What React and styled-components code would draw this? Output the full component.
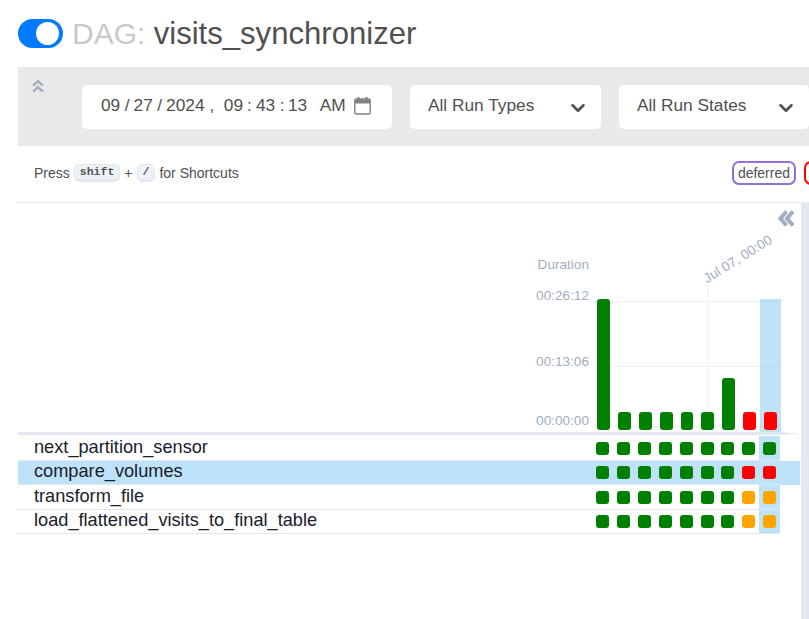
import React from "react";
import styled, { createGlobalStyle } from "styled-components";
import { ChevronDown } from "lucide-react";

const GlobalStyle = createGlobalStyle`
  html, body {
    margin: 0;
    padding: 0;
    background: #fff;
    overflow: hidden;
  }
  body {
    font-family: "Liberation Sans", Arial, sans-serif;
    color: #51504f;
  }
`;

const Page = styled.div`
  width: 809px;
  height: 619px;
  padding-left: 18px;
  box-sizing: border-box;
  display: flex;
  flex-direction: column;
  overflow: hidden;
`;

const TitleRow = styled.div`
  height: 67px;
  flex: none;
  display: flex;
  align-items: center;
  gap: 9px;
  padding-bottom: 1px;
  box-sizing: border-box;
`;

const Toggle = styled.div`
  width: 45px;
  height: 29px;
  border-radius: 15px;
  background: #007bff;
  position: relative;
  flex: none;
  &::after {
    content: "";
    position: absolute;
    width: 23px;
    height: 23px;
    border-radius: 50%;
    background: #fff;
    top: 3px;
    right: 4px;
  }
`;

const Title = styled.h1`
  margin: 0;
  font-size: 31.1px;
  font-weight: 400;
  line-height: 33px;
  white-space: nowrap;
  span {
    color: #c9c9c9;
    font-size: 30px;
  }
`;

const FilterPanel = styled.div`
  height: 79px;
  flex: none;
  background: #e9e9ea;
  display: flex;
  gap: 18px;
  padding-top: 18px;
  box-sizing: border-box;
  position: relative;
`;

const CollapseUp = styled.svg`
  position: absolute;
  left: 14px;
  top: 12px;
  width: 12px;
  height: 15px;
  color: #a0aec0;
`;

const Field = styled.div`
  width: ${(p) => p.$width}px;
  margin-left: ${(p) => p.$offset || 0}px;
  height: 44px;
  flex: none;
  background: #fff;
  border-radius: 5px;
  display: flex;
  align-items: center;
  box-sizing: border-box;
  font-size: 17.3px;
  white-space: nowrap;
`;

const DateField = styled(Field)`
  padding: 0 0 3px 19px;
`;

const Seg = styled.span`
  margin-left: ${(p) => p.$gap || 0}px;
`;

const CalendarIcon = styled.svg`
  width: 17px;
  height: 19px;
  margin-left: 8px;
  color: #808080;
`;

const SelectField = styled(Field)`
  padding: 0 12px 3px 18px;
  justify-content: space-between;
  svg {
    margin-top: 4px;
  }
`;

const ShortcutRow = styled.div`
  height: 57px;
  flex: none;
  border-bottom: 1px solid #e2e8f0;
  box-sizing: border-box;
  display: flex;
  align-items: center;
  padding-left: 16px;
  padding-bottom: 3px;
  font-size: 14px;
  overflow: hidden;
`;

const Kbd = styled.kbd`
  font-family: "Liberation Mono", monospace;
  font-size: 11.5px;
  font-weight: 700;
  line-height: 14px;
  background: #edf2f7;
  border: 1px solid #e2e8f0;
  border-bottom-width: 3px;
  border-radius: 5px;
  padding: 0 5px;
  margin: 0 4px;
  color: #51504f;
`;

const Legend = styled.div`
  margin-left: auto;
  display: flex;
  gap: 8px;
  flex: none;
  margin-right: -39px;
`;

const Badge = styled.div`
  height: 24px;
  box-sizing: border-box;
  border: 2px solid ${(p) => p.$color};
  border-radius: 7px;
  padding: 0 3.5px;
  display: flex;
  align-items: center;
  font-size: 14px;
`;

const GridPanel = styled.div`
  flex: 1;
  display: flex;
  min-height: 0;
`;

const Main = styled.div`
  flex: 1;
  min-width: 0;
  margin-right: 1px;
`;

const Stripe = styled.div`
  width: 8px;
  flex: none;
  background: #e2e8f0;
`;

const CollapseBar = styled.div`
  height: 96px;
  display: flex;
  justify-content: flex-end;
  padding: 6px 5px 0 0;
  box-sizing: border-box;
  color: #a0aec0;
`;

const ChartArea = styled.div`
  display: flex;
  height: 133px;
  justify-content: flex-end;
  padding-right: 19px;
`;

const YAxis = styled.div`
  width: 70px;
  flex: none;
  margin-right: 4px;
  text-align: right;
  font-size: 13.6px;
  line-height: 14px;
  color: #a0aec0;
  position: relative;
`;

const AxisLabel = styled.div`
  margin-top: ${(p) => p.$top}px;
  white-space: nowrap;
`;

const AxisTitle = styled.div`
  position: absolute;
  right: 0;
  top: -41px;
`;

const Plot = styled.div`
  width: 188px;
  flex: none;
  display: flex;
  position: relative;
`;

const HLine = styled.div`
  position: absolute;
  left: 0;
  right: 0;
  top: ${(p) => p.$top}px;
  height: 1px;
  background: rgba(160, 174, 192, 0.18);
`;

const VLine = styled.div`
  position: absolute;
  left: 115px;
  top: -10px;
  bottom: 2px;
  width: 1px;
  background: #edf2f7;
`;

const DateTick = styled.div`
  position: absolute;
  left: 112px;
  top: -26px;
  font-size: 13.6px;
  line-height: 14px;
  color: #a0aec0;
  white-space: nowrap;
  transform: rotate(-32deg);
  transform-origin: left center;
`;

const BarCol = styled.div`
  width: 20.875px;
  flex: none;
  padding: 0 4px 2px;
  box-sizing: border-box;
  display: flex;
  align-items: flex-end;
  background: ${(p) => (p.$active ? "#bee3f8" : "transparent")};
`;

const Bar = styled.div`
  width: 13px;
  height: ${(p) => p.$height}px;
  border-radius: 3px;
  background: ${(p) => p.$color};
  position: relative;
  z-index: 1;
`;

const Separator = styled.div`
  height: 3px;
  background: #e2e8f0;
  margin-bottom: 1px;
  clip-path: polygon(0 0, 762px 0, 100% 60%, 762px 100%, 0 100%);
`;

const Row = styled.div`
  background: ${(p) => (p.$selected ? "#bee3f8" : "transparent")};
`;

const RowBody = styled.div`
  height: ${(p) => p.$height}px;
  box-sizing: border-box;
  display: flex;
  align-items: stretch;
  margin-right: 20px;
  border-bottom: 1px solid #e2e8f0;
`;

const TaskName = styled.div`
  flex: 1;
  padding-left: 16px;
  font-size: 18.2px;
  line-height: ${(p) => p.$lineHeight}px;
  color: #1a202c;
  white-space: nowrap;
`;

const Cell = styled.div`
  width: 20.875px;
  flex: none;
  display: flex;
  align-items: center;
  padding-left: 4px;
  box-sizing: border-box;
  background: ${(p) => (p.$active ? "#bee3f8" : "transparent")};
`;

const Square = styled.div`
  width: 13px;
  height: 13px;
  border-radius: 3px;
  background: ${(p) => p.$color};
`;

const G = "#008000";
const R = "#ff0000";
const O = "#ffa500";

const bars = [
  [131, G], [18, G], [18, G], [18, G], [18, G], [18, G], [52, G], [18, R], [18, R],
];

const tasks = [
  { name: "next_partition_sensor", height: 25, states: [G, G, G, G, G, G, G, G, G] },
  { name: "compare_volumes", height: 24, selected: true, states: [G, G, G, G, G, G, G, R, R] },
  { name: "transform_file", height: 25, states: [G, G, G, G, G, G, G, O, O] },
  { name: "load_flattened_visits_to_final_table", height: 24, states: [G, G, G, G, G, G, G, O, O] },
];

const App = () => {
  return (
    <>
      <GlobalStyle />
      <Page>
        <TitleRow>
          <Toggle />
          <Title>
            <span>DAG: </span>visits_synchronizer
          </Title>
        </TitleRow>

        <FilterPanel>
          <CollapseUp viewBox="0 0 12 15" fill="none" stroke="currentColor" strokeWidth="2.4">
            <path d="M1.2 6.6 6 2.2l4.8 4.4M1.2 12.6 6 8.2l4.8 4.4" />
          </CollapseUp>
          <DateField $width={310} $offset={64}>
            <Seg>09</Seg>
            <Seg $gap={4.5}>/</Seg>
            <Seg $gap={4}>27</Seg>
            <Seg $gap={4.5}>/</Seg>
            <Seg $gap={4}>2024</Seg>
            <Seg $gap={5}>,</Seg>
            <Seg $gap={9.5}>09</Seg>
            <Seg $gap={4}>:</Seg>
            <Seg $gap={4}>43</Seg>
            <Seg $gap={4.5}>:</Seg>
            <Seg $gap={3.5}>13</Seg>
            <Seg $gap={12.5}>AM</Seg>
            <CalendarIcon viewBox="0 0 17 19" fill="none">
              <path d="M1 7.5h15V3.5H1z" fill="currentColor" />
              <rect x="0.8" y="3" width="15.4" height="15" rx="1.5" stroke="currentColor" strokeWidth="1.4" />
              <path d="M4.5 1v3M12.5 1v3" stroke="currentColor" strokeWidth="2" />
            </CalendarIcon>
          </DateField>
          <SelectField $width={191}>
            All Run Types
            <ChevronDown size={22} strokeWidth={2.8} />
          </SelectField>
          <SelectField $width={190}>
            All Run States
            <ChevronDown size={22} strokeWidth={2.8} />
          </SelectField>
        </FilterPanel>

        <ShortcutRow>
          Press <Kbd>shift</Kbd> + <Kbd>/</Kbd> for Shortcuts
          <Legend>
            <Badge $color="#9370db">deferred</Badge>
            <Badge $color="#ff0000">failed</Badge>
          </Legend>
        </ShortcutRow>

        <GridPanel>
          <Main>
            <CollapseBar>
              <svg width="17" height="19" viewBox="0 0 17 19" fill="none" stroke="currentColor" strokeWidth="4">
                <path d="M8.5 2.5 2.5 9.5l6 7M15 2.5 9 9.5l6 7" />
              </svg>
            </CollapseBar>
            <ChartArea>
              <YAxis>
                <AxisTitle>Duration</AxisTitle>
                <AxisLabel $top={-10}>00:26:12</AxisLabel>
                <AxisLabel $top={52}>00:13:06</AxisLabel>
                <AxisLabel $top={45}>00:00:00</AxisLabel>
              </YAxis>
              <Plot>
                <HLine $top={2} />
                <HLine $top={67} />
                <HLine $top={127} />
                <VLine />
                <DateTick>Jul 07, 00:00</DateTick>
                {bars.map(([height, color], i) => (
                  <BarCol key={i} $active={i === 8}>
                    <Bar $height={height} $color={color} />
                  </BarCol>
                ))}
              </Plot>
            </ChartArea>
            <Separator />
            {tasks.map((task) => (
              <Row key={task.name} $selected={task.selected}>
                <RowBody $height={task.height}>
                  <TaskName $lineHeight={task.height - 3}>{task.name}</TaskName>
                  {task.states.map((color, i) => (
                    <Cell key={i} $active={i === 8}>
                      <Square $color={color} />
                    </Cell>
                  ))}
                </RowBody>
              </Row>
            ))}
          </Main>
          <Stripe />
        </GridPanel>
      </Page>
    </>
  );
};

export default App;
